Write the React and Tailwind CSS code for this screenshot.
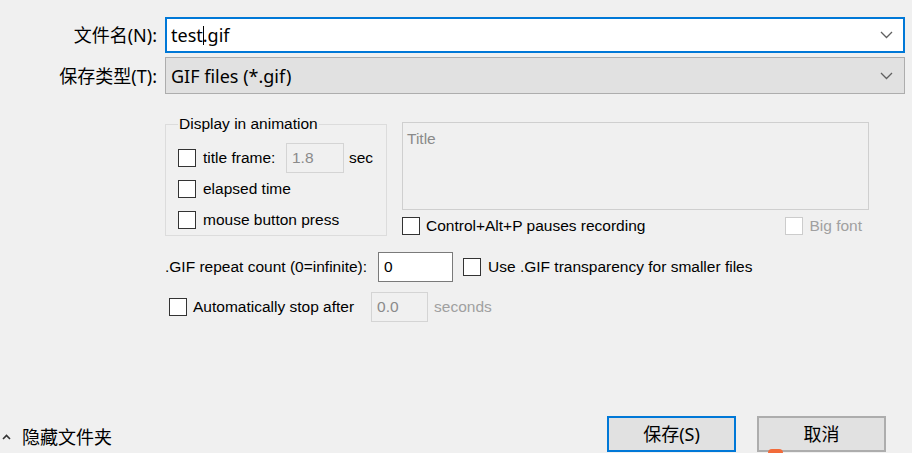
import React from 'react';

const ui = { fontFamily: '"Noto Sans", "Noto Sans CJK SC", sans-serif' };
const ms = { fontFamily: '"Liberation Sans", Arial, sans-serif' };

function Chevron() {
  return (
    <svg width="13" height="8" viewBox="0 0 13 8" className="text-[#606060]">
      <polyline points="1,1 6.5,6.5 12,1" fill="none" stroke="currentColor" strokeWidth="1.3" />
    </svg>
  );
}

function Check({ disabled }) {
  return (
    <span
      className={
        'w-[18px] h-[18px] shrink-0 border bg-white ' +
        (disabled ? 'border-[#cccccc]' : 'border-[#333333]')
      }
    />
  );
}

function Field({ value, disabled, className }) {
  return (
    <div
      className={
        'h-[30px] shrink-0 flex items-center pl-[5px] border text-[15.5px] ' +
        (disabled ? 'border-[#d4d4d4] bg-[#f0f0f0] text-[#8a8a8a] ' : 'border-[#7a7a7a] bg-white text-black ') +
        className
      }
    >
      {value}
    </div>
  );
}

export default function App() {
  return (
    <div className="relative w-[912px] h-[453px] overflow-hidden bg-[#f0f0f0] text-black whitespace-nowrap" style={ui}>
      {/* file name */}
      <div className="pt-[17px] flex items-center">
        <div className="w-[165px] pr-[8px] text-right text-[18px] leading-none">文件名(N):</div>
        <div className="w-[740px] h-[36px] border-2 border-[#0078d7] bg-white flex items-center pl-[4px] pr-[10px]">
          <span className="text-[18px] leading-none flex-1 flex items-center">
            test<span className="w-px h-[19px] bg-black -mr-px" />.gif
          </span>
          <Chevron />
        </div>
      </div>

      {/* file type */}
      <div className="mt-[4px] flex items-center">
        <div className="w-[165px] pr-[8px] text-right text-[18px] leading-none">保存类型(T):</div>
        <div className="w-[740px] h-[37px] border border-[#adadad] bg-[#e1e1e1] flex items-center pl-[5px] pr-[11px]">
          <span className="text-[18px] leading-none flex-1">GIF files (*.gif)</span>
          <Chevron />
        </div>
      </div>

      {/* options */}
      <div className="mt-[21px] pl-[165px] flex" style={ms}>
        <fieldset className="w-[222px] min-w-0 border border-[#dcdcdc] px-[12px] pb-0">
          <legend className="ml-0 px-[1px] text-[15.5px] leading-[18px]">Display in animation</legend>
          <div className="mt-[10px] flex flex-col gap-[1px] text-[15.5px]">
            <div className="h-[30px] flex items-center">
              <Check />
              <span className="ml-[7px] w-[83px]">title frame:</span>
              <Field value="1.8" disabled className="w-[58px]" />
              <span className="ml-[5px]">sec</span>
            </div>
            <div className="h-[30px] flex items-center">
              <Check />
              <span className="ml-[7px]">elapsed time</span>
            </div>
            <div className="h-[30px] flex items-center">
              <Check />
              <span className="ml-[7px]">mouse button press</span>
            </div>
          </div>
        </fieldset>

        <div className="ml-[15px] pt-[7px] w-[467px]">
          <div className="h-[88px] border border-[#cfcfcf] bg-[#f0f0f0] px-[4px] pt-[4px] text-[15.5px] text-[#8a8a8a]">Title</div>
          <div className="mt-[6px] h-[20px] flex items-center text-[15.5px]">
            <Check />
            <span className="ml-[6px] flex-1">Control+Alt+P pauses recording</span>
            <Check disabled />
            <span className="ml-[6px] mr-[7px] text-[#a0a0a0]">Big font</span>
          </div>
        </div>
      </div>

      {/* repeat count */}
      <div className="mt-[16px] pl-[165px] h-[30px] flex items-center text-[15.5px]" style={ms}>
        <span>.GIF repeat count (0=infinite):</span>
        <Field value="0" className="ml-[11px] w-[75px]" />
        <span className="ml-[10px] flex items-center">
          <Check />
          <span className="ml-[7px]">Use .GIF transparency for smaller files</span>
        </span>
      </div>

      {/* auto stop */}
      <div className="mt-[10px] pl-[169px] h-[30px] flex items-center text-[15.5px]" style={ms}>
        <Check />
        <span className="ml-[6px]">Automatically stop after</span>
        <Field value="0.0" disabled className="ml-[17px] w-[57px]" />
        <span className="ml-[6px] text-[#a0a0a0]">seconds</span>
      </div>

      {/* bottom bar */}
      <div className="mt-[94px] h-[36px] flex items-center">
        <div className="flex-1 flex items-center pl-[2px] pt-[6px]">
          <svg width="9" height="6" viewBox="0 0 9 6">
            <polyline points="1,5 4.5,1.5 8,5" fill="none" stroke="#333" strokeWidth="1.6" />
          </svg>
          <span className="ml-[11px] text-[18px] leading-none">隐藏文件夹</span>
        </div>
        <button className="w-[129px] h-[36px] border-2 border-[#0078d7] bg-[#e1e1e1] text-[18px] leading-none">保存(S)</button>
        <button className="ml-[21px] mr-[26px] w-[129px] h-[36px] border-2 border-[#adadad] bg-[#e1e1e1] text-[18px] leading-none">取消</button>
      </div>

      <div className="absolute left-[768px] top-[449px] w-[15px] h-[8px] rounded-full bg-[#f26b3a]" />
    </div>
  );
}
